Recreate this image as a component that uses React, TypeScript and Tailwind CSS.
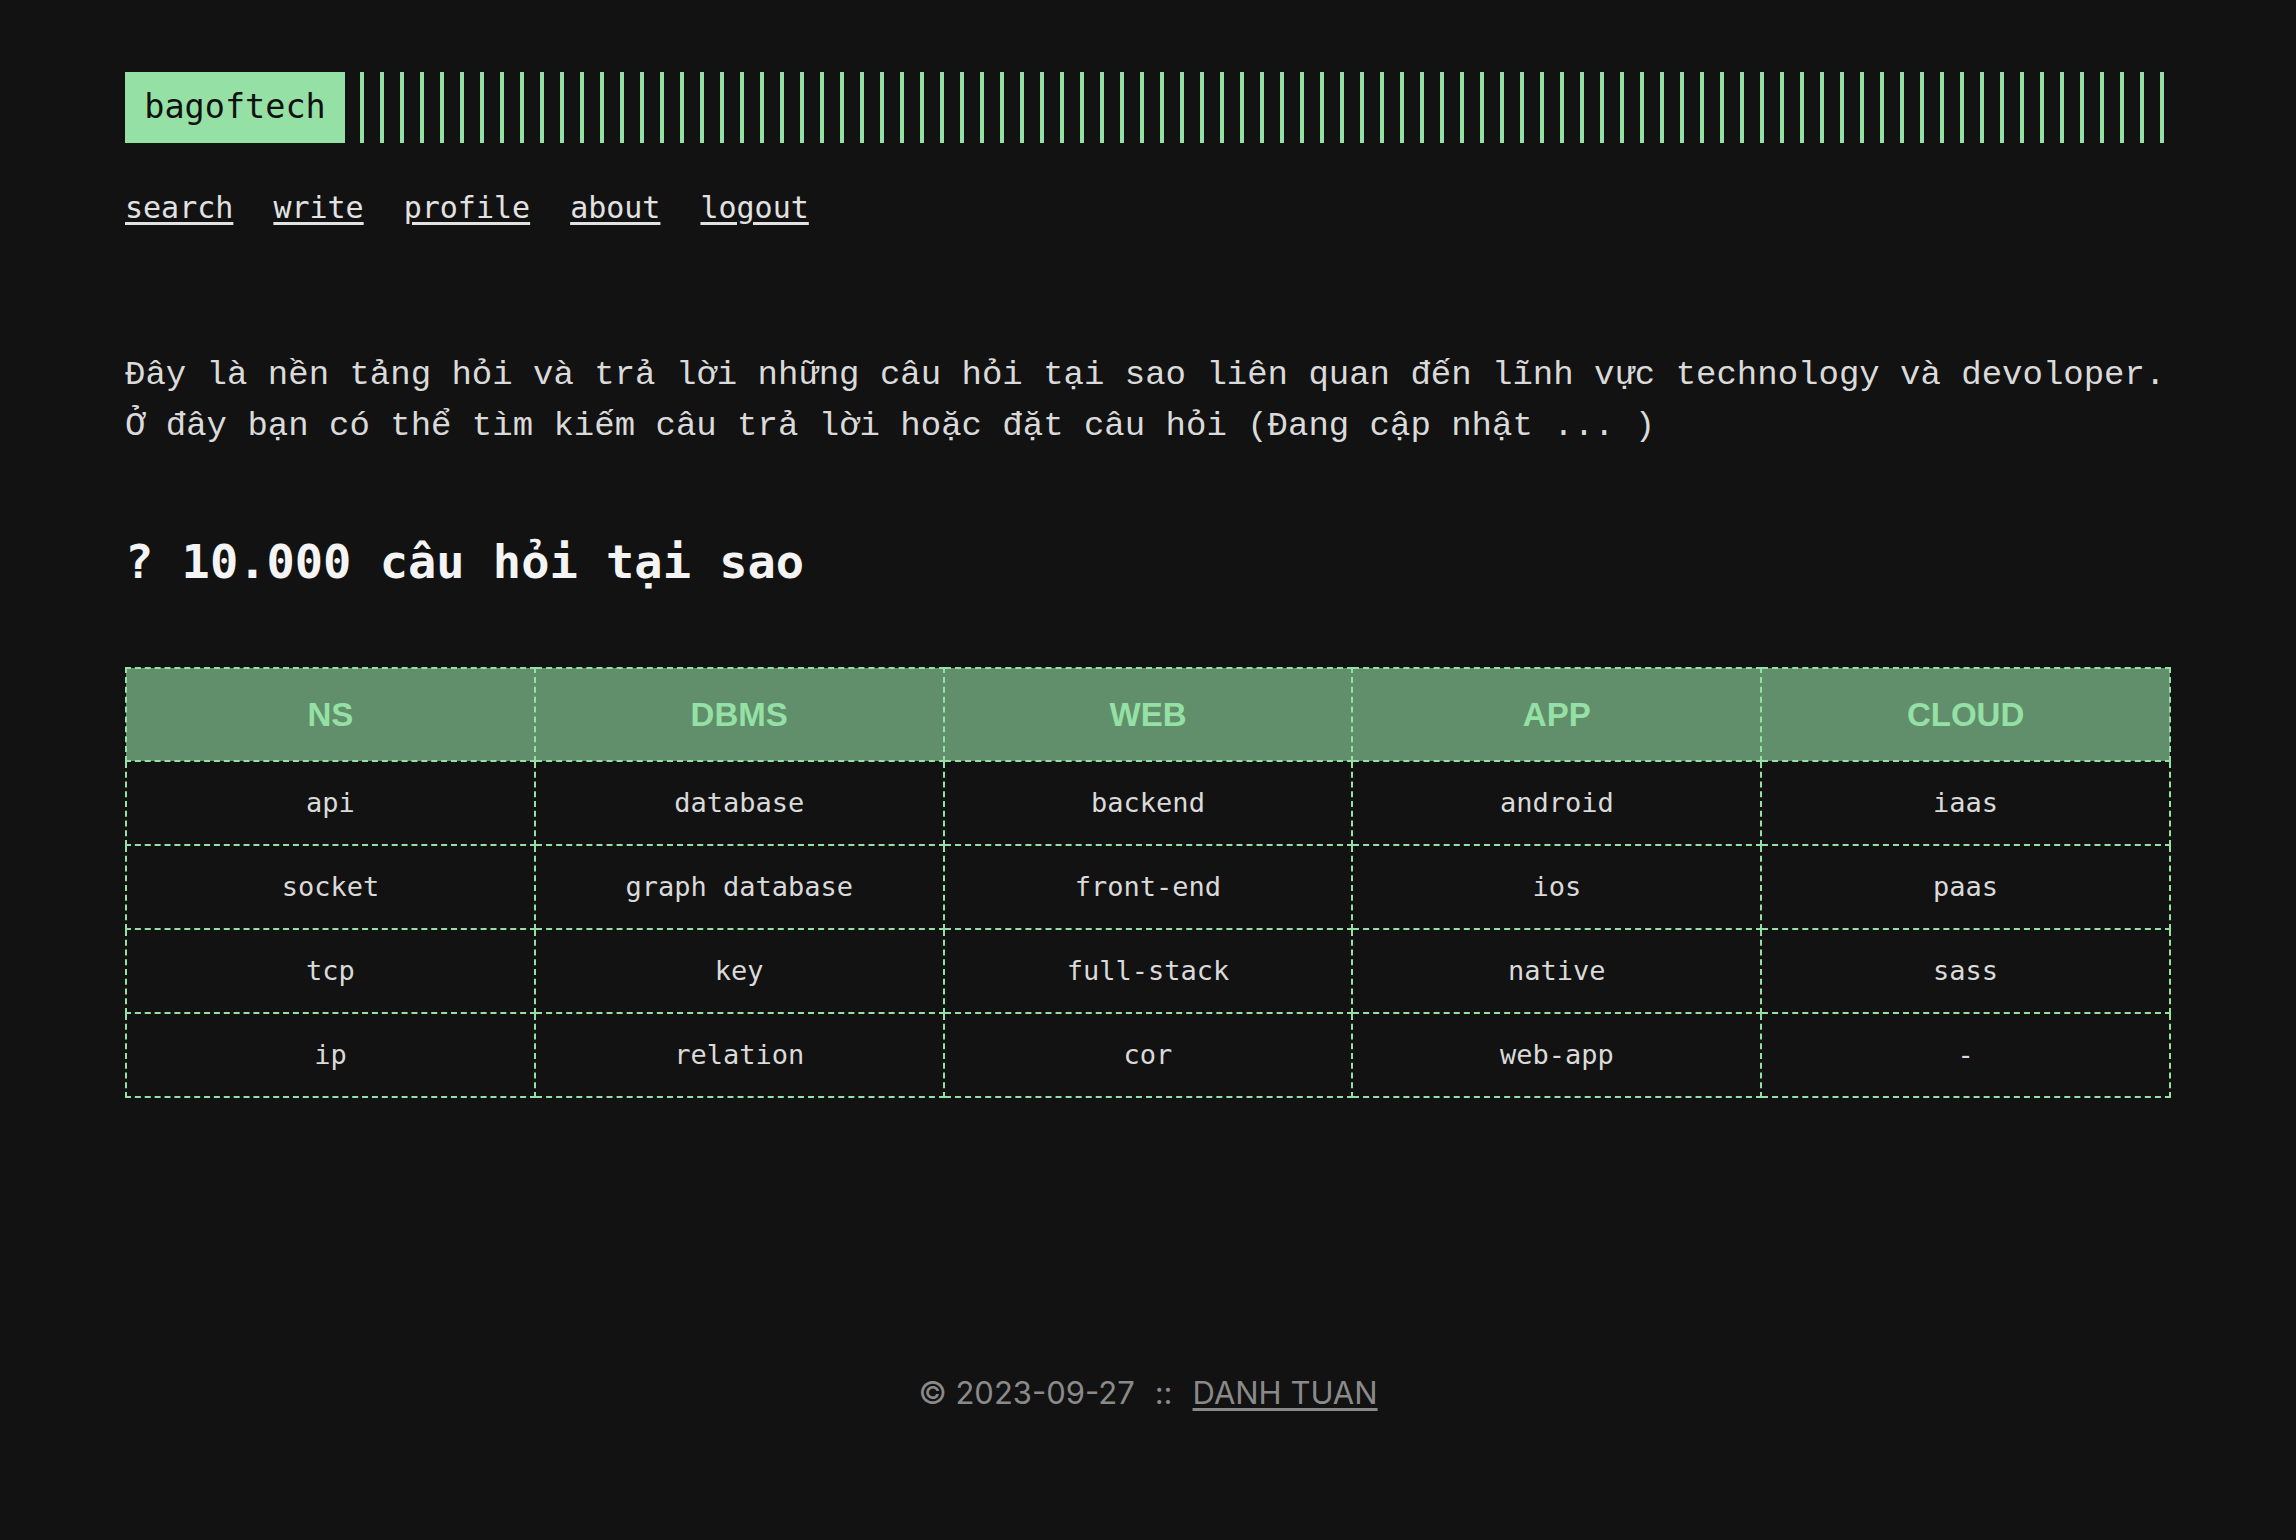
import React from "react";

const mono = { fontFamily: '"DejaVu Sans Mono", "Liberation Mono", monospace' };
const mono2 = { fontFamily: '"Liberation Mono", "DejaVu Sans Mono", monospace' };

const cols = ["NS", "DBMS", "WEB", "APP", "CLOUD"];
const rows = [
  ["api", "database", "backend", "android", "iaas"],
  ["socket", "graph database", "front-end", "ios", "paas"],
  ["tcp", "key", "full-stack", "native", "sass"],
  ["ip", "relation", "cor", "web-app", "-"],
];

export default function App() {
  return (
    <div className="min-h-screen bg-[#121212] px-[125px] pt-[72px] pb-[100px] text-[#dcdcdc]" style={mono}>
      <header className="flex h-[71px] items-stretch">
        <div className="flex w-[220px] shrink-0 items-center justify-center bg-[#95e1a5] text-[33.5px] text-[#111111]">
          bagoftech
        </div>
        <div className="ml-[15px] flex-1 bg-[repeating-linear-gradient(90deg,#95e1a5_0px,#95e1a5_4px,transparent_4px,transparent_20px)]" />
      </header>

      <nav className="mt-[42px] flex gap-[40px] text-[30px] leading-[45px] text-[#e2e2e2]">
        {["search", "write", "profile", "about", "logout"].map((l) => (
          <a key={l} href="#" className="underline decoration-[3px] underline-offset-[4px]">
            {l}
          </a>
        ))}
      </nav>

      <p className="mt-[120px] whitespace-nowrap text-[34px] leading-[51px] text-[#dadada]" style={mono2}>
        Đây là nền tảng hỏi và trả lời những câu hỏi tại sao liên quan đến lĩnh vực technology và devoloper.
        <br />
        Ở đây bạn có thể tìm kiếm câu trả lời hoặc đặt câu hỏi (Đang cập nhật ... )
      </p>

      <h2 className="mt-[79px] text-[47px] font-bold leading-[61px] text-[#f4f4f4]">? 10.000 câu hỏi tại sao</h2>

      <table className="mt-[75px] w-full table-fixed border-collapse border-2 border-dashed border-[#95e1a5]">
        <thead>
          <tr className="h-[93px] bg-[#618f6c]">
            {cols.map((c) => (
              <th
                key={c}
                className="border-2 border-dashed border-[#95e1a5] text-center text-[33px] font-bold text-[#95e1a5]"
                style={{ fontFamily: '"Liberation Sans", Arial, sans-serif' }}
              >
                {c}
              </th>
            ))}
          </tr>
        </thead>
        <tbody>
          {rows.map((r, i) => (
            <tr key={i} className="h-[84px]">
              {r.map((c, j) => (
                <td key={j} className="border-2 border-dashed border-[#95e1a5] text-center text-[27px] text-[#dadada]">
                  {c}
                </td>
              ))}
            </tr>
          ))}
        </tbody>
      </table>

      <footer
        className="mt-[277px] flex justify-center text-[31px] leading-[36px] text-[#8a8a8a]"
        style={{ fontFamily: 'Inter, "Liberation Sans", sans-serif' }}
      >
        <span>© 2023-09-27</span>
        <span className="mx-[20px]">::</span>
        <a href="#" className="underline decoration-[3px] underline-offset-[4px]">
          DANH TUAN
        </a>
      </footer>
    </div>
  );
}
